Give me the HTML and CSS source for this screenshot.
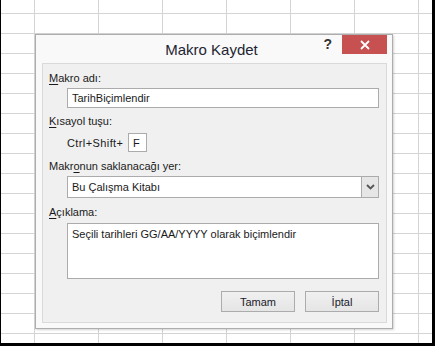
FILE: index.html
```html
<!DOCTYPE html>
<html lang="tr">
<head>
    <meta charset="UTF-8">
    <meta name="viewport" content="width=device-width, initial-scale=1.0">
    <title>Makro Kaydet</title>
    <link rel="stylesheet" href="styles.css">
</head>
<body>
    <div class="screen">
        <div class="dialog">
            <div class="titlebar">
                <span></span>
                <h1 class="title">Makro Kaydet</h1>
                <div class="controls">
                    <span class="help">?</span>
                    <span class="close">
                        <svg width="10" height="10" viewBox="0 0 10 10"><path d="M1 1 L9 9 M9 1 L1 9" stroke="#fff" stroke-width="1.8"/></svg>
                    </span>
                </div>
            </div>

            <div class="panel">
                <div class="label"><u>M</u>akro adı:</div>
                <input class="field text" type="text" value="TarihBiçimlendir">

                <div class="label gap"><u>K</u>ısayol tuşu:</div>
                <div class="field shortcut">
                    <span class="combo">Ctrl+Shift+</span>
                    <input class="key" type="text" value="F">
                </div>

                <div class="label gap2">Makr<u>o</u>nun saklanacağı yer:</div>
                <div class="field select">
                    <span class="select-value">Bu Çalışma Kitabı</span>
                    <span class="select-btn">
                        <svg width="9" height="6" viewBox="0 0 9 6"><path d="M1 1 L4.5 4.5 L8 1" fill="none" stroke="#555" stroke-width="1.8"/></svg>
                    </span>
                </div>

                <div class="label gap2"><u>A</u>çıklama:</div>
                <textarea class="field note">Seçili tarihleri GG/AA/YYYY olarak biçimlendir</textarea>

                <div class="actions">
                    <button class="btn">Tamam</button>
                    <button class="btn">İptal</button>
                </div>
            </div>
        </div>
    </div>
</body>
</html>
```

FILE: styles.css
```css
body { margin: 0; padding: 0; font-family: "Liberation Sans", Arial, sans-serif; color: #1a1a1a; }
.screen { box-sizing: border-box; width: 435px; height: 346px; border-left: 1px solid #000; border-right: 3px solid #000; border-bottom: 3px solid #000; padding: 34px 0 0 34px; background-color: #fff; background-image: linear-gradient(to right, #d4d4d4 1px, transparent 1px), linear-gradient(to bottom, #d4d4d4 1px, transparent 1px); background-size: 64px 100%, 100% 20px; background-position: 33px 0, 0 13px; overflow: hidden; }

.dialog { box-sizing: border-box; width: 358px; height: 295px; background: #f9f9f9; border: 1px solid #adadad; box-shadow: 1px 1px 2px rgba(0, 0, 0, 0.18); display: flex; flex-direction: column; }
.titlebar { height: 28px; display: grid; grid-template-columns: 1fr auto 1fr; align-items: start; padding-right: 5px; }
.title { margin: 0; font-size: 15px; font-weight: normal; line-height: 29px; color: #1e2533; }
.controls { display: flex; justify-content: flex-end; align-items: center; }
.help { font-weight: bold; font-size: 14px; color: #333; line-height: 19px; margin-right: 10px; }
.close { width: 45px; height: 19px; background: #c75050; display: flex; align-items: center; justify-content: center; }

.panel { flex: 1; margin: 0 5px 5px 6px; background: #f0f0f0; border: 1px solid #dadada; padding: 7px 6px 0 6px; font-size: 11px; }
.label { line-height: 15px; }
.label u { text-decoration-thickness: 1px; text-underline-offset: 2px; }
.gap { margin-top: 6px; }
.gap2 { margin-top: 7px; }

.field { display: block; box-sizing: border-box; margin-left: 18px; width: 312px; font-family: inherit; font-size: 11px; color: #1a1a1a; }
.text { height: 20px; margin-top: 2px; border: 1px solid #ababab; background: #fff; padding: 0 4px; outline: none; }

.shortcut { display: flex; align-items: center; gap: 4px; margin-top: 4px; height: 19px; }
.combo { width: 57px; letter-spacing: 0.4px; }
.key { box-sizing: border-box; width: 19px; height: 19px; border: 1px solid #ababab; background: #fff; padding: 0 4px; font-family: inherit; font-size: 11px; color: #1a1a1a; outline: none; }

.select { display: flex; height: 22px; margin-top: 2px; border: 1px solid #ababab; background: #fff; }
.select-value { flex: 1; line-height: 20px; padding-left: 4px; }
.select-btn { width: 16px; background: #e6e6e6; border-left: 1px solid #ababab; display: flex; align-items: center; justify-content: center; }

.note { height: 56px; margin-top: 3px; border: 1px solid #ababab; background: #fff; padding: 3px 4px; resize: none; line-height: 15px; outline: none; }

.actions { display: flex; justify-content: flex-end; gap: 10px; margin-top: 12px; padding-right: 1px; }
.btn { box-sizing: border-box; width: 74px; height: 21px; border: 1px solid #acacac; background: linear-gradient(#f0f0f0, #e5e5e5); font-family: inherit; font-size: 11px; color: #1a1a2a; padding: 0; }
```
